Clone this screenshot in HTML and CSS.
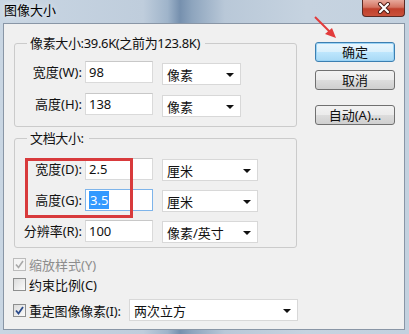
FILE: index.html
```html
<!DOCTYPE html>
<html lang="zh-CN">
<head>
    <meta charset="UTF-8">
    <meta name="viewport" content="width=device-width, initial-scale=1.0">
    <title>图像大小</title>
    <link rel="stylesheet" href="styles.css">
</head>
<body>
    <div class="window">
        <div class="titlebar">
            <span class="title">图像大小</span>
            <span class="close-btn">
                <svg width="18" height="12" viewBox="0 0 18 12">
                    <path d="M5 2 L13 10 M13 2 L5 10" stroke="#4a1a14" stroke-width="4" stroke-linecap="round"/>
                    <path d="M5 2 L13 10 M13 2 L5 10" stroke="#ffffff" stroke-width="2.2" stroke-linecap="round"/>
                </svg>
            </span>
        </div>

        <div class="frame">
            <div class="client">
                <div class="main">
                    <!-- Pixel dimensions -->
                    <fieldset class="group group-pixels">
                        <legend>像素大小:39.6K(之前为123.8K)</legend>
                        <div class="field-row">
                            <span class="field-label">宽度(W):</span>
                            <div class="textbox">98</div>
                            <div class="combo combo-short">像素<span class="combo-arrow"></span></div>
                        </div>
                        <div class="field-row">
                            <span class="field-label">高度(H):</span>
                            <div class="textbox">138</div>
                            <div class="combo combo-short">像素<span class="combo-arrow"></span></div>
                        </div>
                    </fieldset>

                    <!-- Document size -->
                    <fieldset class="group group-doc">
                        <legend>文档大小:</legend>
                        <div class="field-row">
                            <span class="field-label">宽度(D):</span>
                            <div class="textbox">2.5</div>
                            <div class="combo combo-long">厘米<span class="combo-arrow"></span></div>
                        </div>
                        <div class="field-row">
                            <span class="field-label">高度(G):</span>
                            <div class="textbox focused"><span class="selected">3.5</span></div>
                            <div class="combo combo-long">厘米<span class="combo-arrow"></span></div>
                        </div>
                        <div class="field-row">
                            <span class="field-label">分辨率(R):</span>
                            <div class="textbox">100</div>
                            <div class="combo combo-long">像素/英寸<span class="combo-arrow"></span></div>
                        </div>
                    </fieldset>

                    <div class="check-row disabled">
                        <span class="checkbox checked"><svg width="9" height="9" viewBox="0 0 9 9"><path d="M1 4.5 L3.5 7.5 L8 1" fill="none" stroke="#a9a9a9" stroke-width="1.6"/></svg></span>
                        缩放样式(Y)
                    </div>
                    <div class="check-row">
                        <span class="checkbox"></span>
                        约束比例(C)
                    </div>
                    <div class="check-row resample">
                        <span class="checkbox checked"><svg width="9" height="9" viewBox="0 0 9 9"><path d="M1 4.5 L3.5 7.5 L8 1" fill="none" stroke="#2a4a8a" stroke-width="1.8"/></svg></span>
                        <span class="resample-label">重定图像像素(I):</span>
                        <div class="combo combo-wide">两次立方<span class="combo-arrow"></span></div>
                    </div>
                </div>

                <div class="actions">
                    <button class="btn btn-default">确定</button>
                    <button class="btn">取消</button>
                    <button class="btn btn-auto">自动(A)...</button>
                </div>
            </div>
        </div>

        <!-- red annotations drawn over the dialog -->
        <div class="mark-box"></div>
        <svg class="mark-arrow" width="30" height="30" viewBox="0 0 30 30">
            <path d="M4 3 L20 19" stroke="#e23b3b" stroke-width="2"/>
            <polygon points="25,24 14,20 21,14" fill="#e23b3b"/>
        </svg>
    </div>
</body>
</html>
```

FILE: styles.css
```css
/* Page */
body {
    margin: 0;
    font-family: "Noto Sans", "Noto Sans CJK SC", sans-serif;
    font-size: 13px;
    color: #111;
}

/* Window frame */
.window {
    position: relative;
    width: 409px;
    height: 334px;
    display: flex;
    flex-direction: column;
    background: linear-gradient(90deg, #c9d6e3 0%, #bfcddc 35%, #9fb4ca 41%, #7690ae 44%, #8ea5be 47%, #b9c8d8 55%, #c6d3e0 75%, #c3d1df 100%);
}

.titlebar {
    height: 23px;
    display: flex;
    align-items: flex-start;
    justify-content: space-between;
}

.title {
    margin: 2px 0 0 4px;
    font-size: 13px;
    line-height: 17px;
    color: #000;
    text-shadow: 0 0 6px rgba(255, 255, 255, 0.9);
}

.close-btn {
    width: 43px;
    height: 17px;
    margin-right: 4px;
    display: flex;
    align-items: center;
    justify-content: center;
    border: 1px solid #5b2a24;
    border-top: none;
    border-radius: 0 0 4px 4px;
    background: linear-gradient(180deg, #e7a89b 0%, #d47462 45%, #c0402c 55%, #c9513b 100%);
    box-sizing: border-box;
}

.frame {
    flex: 1;
    display: flex;
    padding: 0 4px 4px 3px;
}

.client {
    flex: 1;
    display: flex;
    background: #f0f0f0;
    border: 1px solid #8996a6;
}

/* Left column */
.main {
    width: 293px;
    padding-left: 9px;
}

.group {
    margin: 0 0 0 1px;
    width: 283px;
    box-sizing: border-box;
    border: 1px solid #cbcbcb;
    border-radius: 3px;
    padding: 0;
}

.group legend {
    margin-left: 12px;
    padding: 0 5px 0 3px;
    line-height: 16px;
    letter-spacing: -0.35px;
}

.group-pixels {
    margin-top: 11px;
    padding-top: 10px;
    padding-bottom: 9px;
}

.group-doc {
    margin-top: 3px;
    padding-top: 12px;
    padding-bottom: 4px;
}

.field-row {
    display: flex;
    align-items: flex-start;
}

.field-row + .field-row {
    margin-top: 8px;
}

.field-label {
    width: 67px;
    text-align: right;
    line-height: 22px;
    white-space: nowrap;
}

.textbox {
    width: 68px;
    height: 22px;
    margin-left: 3px;
    box-sizing: border-box;
    border: 1px solid #dadada;
    border-top-color: #c8c8c8;
    background: #fff;
    padding-left: 3px;
    line-height: 20px;
}

.textbox.focused {
    border-color: #7eb4ea;
}

.selected {
    background: #3399ff;
    color: #fff;
    padding: 0 1px;
}

.combo {
    position: relative;
    height: 22px;
    margin-left: 9px;
    box-sizing: border-box;
    border: 1px solid #d8d8d8;
    background: #fff;
    padding-left: 4px;
    line-height: 22px;
}

.combo-short {
    width: 79px;
    margin-top: 2px;
}

.combo-long {
    width: 96px;
    margin-top: 1px;
}

.combo-wide {
    width: 169px;
}

.combo-arrow {
    position: absolute;
    right: 6px;
    top: 9px;
    width: 0;
    height: 0;
    border-left: 4px solid transparent;
    border-right: 4px solid transparent;
    border-top: 4px solid #111;
}

/* Checkboxes */
.check-row {
    display: flex;
    align-items: center;
    height: 20px;
    gap: 3px;
}

.check-row.disabled {
    margin-top: 6px;
    color: #8d8d8d;
}

.check-row.resample {
    height: 22px;
    margin-top: 5px;
    gap: 0;
}

.checkbox {
    width: 13px;
    height: 13px;
    box-sizing: border-box;
    border: 1px solid #8e8f8f;
    background: linear-gradient(135deg, #dcdcdc, #fbfbfb);
    display: flex;
    align-items: center;
    justify-content: center;
}

.disabled .checkbox {
    border-color: #bcbcbc;
    background: #f4f4f4;
}

.resample-label {
    width: 91px;
    margin-left: 3px;
    white-space: nowrap;
    letter-spacing: -0.2px;
}

/* Right column */
.actions {
    display: flex;
    flex-direction: column;
    margin-left: 9px;
    padding-top: 18px;
}

.btn {
    width: 80px;
    height: 20px;
    padding: 0;
    font-family: inherit;
    font-size: 13px;
    line-height: 18px;
    color: #111;
    border: 1px solid #707070;
    border-radius: 3px;
    background: linear-gradient(180deg, #f2f2f2 0%, #ebebeb 49%, #dddddd 50%, #cfcfcf 100%);
    margin-bottom: 8px;
}

.btn-default {
    border-color: #3c7fb1;
    background: linear-gradient(180deg, #eaf6fd 0%, #d9f0fc 49%, #bee6fd 50%, #a7d9f5 100%);
    box-shadow: inset 0 0 0 1px #9ad3f5;
}

.btn-auto {
    margin-top: 7px;
}

/* Red annotations */
.mark-box {
    position: absolute;
    left: 25px;
    top: 158px;
    width: 108px;
    height: 60px;
    box-sizing: border-box;
    border: 3px solid #d83a3c;
}

.mark-arrow {
    position: absolute;
    left: 311px;
    top: 14px;
}
```
